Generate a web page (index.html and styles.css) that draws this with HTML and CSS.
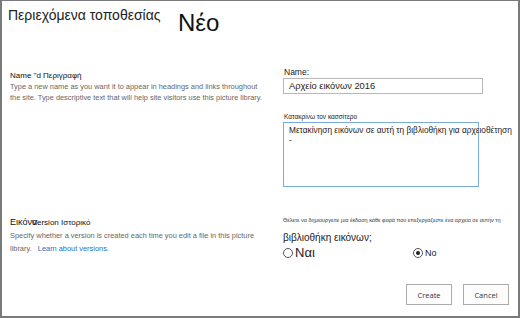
FILE: index.html
```html
<!DOCTYPE html>
<html>
<head>
  <meta charset="utf-8">
  <title>Νέο</title>
  <link rel="stylesheet" href="styles.css">
</head>
<body>
  <div class="frame">
    <div class="header">
      <span class="crumb">Περιεχόμενα τοποθεσίας</span>
      <span class="page-title">Νέο</span>
    </div>

    <div class="section name-section">
      <div class="info">
        <div class="info-title">Name "d Περιγραφή</div>
        <div class="info-text">Type a new name as you want it to appear in headings and links throughout<br>the site. Type descriptive text that will help site visitors use this picture library.</div>
      </div>
      <div class="fields">
        <div class="field-label">Name:</div>
        <div class="text-input">Αρχείο εικόνων 2016</div>
        <div class="field-label small">Κατακρίνω τον κασσίτερο</div>
        <div class="text-area">Μετακίνηση εικόνων σε αυτή τη βιβλιοθήκη για αρχειοθέτηση<br>-</div>
      </div>
    </div>

    <div class="section version-section">
      <div class="info">
        <div class="info-title"><span class="overlap">Εικόνα</span><span class="ver">Version Ιστορικό</span></div>
        <div class="info-text">Specify whether a version is created each time you edit a file in this picture<br>library.&nbsp;&nbsp; <a href="#">Learn about versions.</a></div>
      </div>
      <div class="fields">
        <div class="tiny">Θέλετε να δημιουργείτε μια έκδοση κάθε φορά που επεξεργάζεστε ένα αρχείο σε αυτήν τη</div>
        <div class="question">βιβλιοθήκη εικόνων;</div>
        <div class="radios">
          <label class="radio big"><span class="dot"></span>Ναι</label>
          <label class="radio"><span class="dot on"></span>No</label>
        </div>
      </div>
    </div>

    <div class="buttons">
      <button>Create</button>
      <button>Cancel</button>
    </div>
  </div>
</body>
</html>
```

FILE: styles.css
```css
body, html {
  margin: 0;
}

body {
  font-family: "Liberation Sans", "Noto Sans", sans-serif;
  color: #222;
}

.frame {
  width: 520px;
  height: 318px;
  box-sizing: border-box;
  border: 2px solid #7a7a7a;
  border-top-width: 1px;
  overflow: hidden;
}

.header {
  display: flex;
  align-items: flex-start;
  padding: 6px 0 0 6px;
  height: 56px;
  box-sizing: border-box;
}

.crumb {
  font-size: 14px;
  color: #222;
  width: 170px;
}

.page-title {
  font-size: 24px;
  line-height: 28px;
  margin-top: 2px;
  color: #111;
}

.section {
  display: flex;
  padding-left: 8px;
}

.info {
  width: 273px;
}

.info-title {
  font-size: 8px;
  color: #111;
  line-height: 12px;
  white-space: nowrap;
}

.info-text {
  font-size: 7.4px;
  color: #666;
  line-height: 10.5px;
  white-space: nowrap;
}

.info-text a {
  color: #1f6fc2;
  text-decoration: none;
}

.name-section {
  height: 159px;
  padding-top: 9px;
  box-sizing: border-box;
}

.name-section .info {
  padding-top: 4px;
}

.fields {
  width: 230px;
}

.field-label {
  font-size: 8.5px;
  color: #222;
  line-height: 12px;
  margin-left: 1px;
}

.field-label.small {
  font-size: 6.5px;
  margin-top: 18px;
  line-height: 10px;
}

.text-input {
  width: 200px;
  height: 16px;
  box-sizing: border-box;
  border: 1px solid #b8b8b8;
  font-size: 9.3px;
  line-height: 14px;
  padding-left: 5px;
  color: #222;
}

.text-area {
  width: 196px;
  height: 65px;
  box-sizing: border-box;
  border: 1px solid #79acdc;
  font-size: 8.3px;
  line-height: 10px;
  padding: 2px 0 0 5px;
  white-space: nowrap;
  color: #222;
}

.version-section {
  height: 68px;
}

.overlap {
  font-size: 9px;
  color: #111;
}

.ver {
  margin-left: -5px;
  font-size: 8px;
}

.version-section .info-text {
  line-height: 13px;
}

.tiny {
  font-size: 5.5px;
  color: #333;
  line-height: 8px;
  white-space: nowrap;
}

.question {
  font-size: 10px;
  line-height: 13px;
  margin-top: 7px;
  color: #222;
}

.radios {
  display: flex;
  align-items: center;
  margin-top: 1px;
}

.radio {
  display: flex;
  align-items: center;
  font-size: 9px;
  color: #222;
}

.radio.big {
  font-size: 13px;
  width: 130px;
}

.dot {
  width: 8px;
  height: 8px;
  border: 1px solid #555;
  border-radius: 50%;
  margin-right: 2px;
  position: relative;
}

.dot.on::after {
  content: "";
  position: absolute;
  left: 2px;
  top: 2px;
  width: 4px;
  height: 4px;
  border-radius: 50%;
  background: #222;
}

.buttons {
  display: flex;
  justify-content: flex-end;
  gap: 11px;
  padding-right: 9px;
}

.buttons button {
  width: 46px;
  height: 21px;
  background: #fdfdfd;
  border: 1px solid #ababab;
  font-family: "Open Sans", sans-serif;
  font-size: 7.5px;
  color: #333;
  padding: 0;
}
```
